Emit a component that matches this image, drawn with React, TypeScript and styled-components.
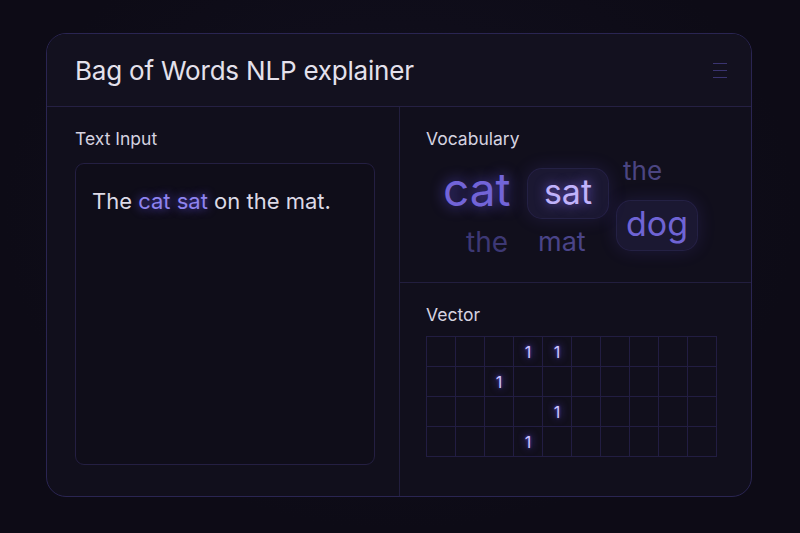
import React from "react";
import styled, { createGlobalStyle } from "styled-components";

const GlobalStyle = createGlobalStyle`
  html, body {
    margin: 0;
    padding: 0;
    background: #0d0b16;
  }
  body {
    font-family: Inter, "Noto Sans", "Liberation Sans", sans-serif;
    -webkit-font-smoothing: antialiased;
  }
`;

const Page = styled.div`
  width: 800px;
  height: 533px;
  box-sizing: border-box;
  padding: 33px 48px 36px 46px;
  background: radial-gradient(ellipse at 50% 40%, #121020 0%, #0d0b16 70%);
`;

const Card = styled.div`
  height: 100%;
  box-sizing: border-box;
  display: flex;
  flex-direction: column;
  border: 1px solid #2a2552;
  border-radius: 20px;
  background: #110f1c;
  overflow: hidden;
`;

const Header = styled.div`
  height: 72px;
  flex-shrink: 0;
  display: flex;
  align-items: center;
  justify-content: space-between;
  padding: 0 24px 0 28px;
  border-bottom: 1px solid #252043;
  background: #13111f;
`;

const Title = styled.h1`
  margin: 0;
  font-size: 26px;
  font-weight: 400;
  letter-spacing: -0.2px;
  color: #e4e1ec;
`;

const MenuIcon = styled.div`
  width: 14px;
  display: flex;
  flex-direction: column;
  gap: 6px;
  & span {
    display: block;
    height: 1px;
    background: #3a3470;
  }
`;

const Body = styled.div`
  flex: 1;
  display: grid;
  grid-template-columns: 353px 1fr;
`;

const LeftColumn = styled.div`
  display: flex;
  flex-direction: column;
  padding: 22px 24px 31px 28px;
  border-right: 1px solid #221e3e;
`;

const RightColumn = styled.div`
  display: grid;
  grid-template-rows: 176px 1fr;
`;

const Section = styled.div<{ divider?: boolean }>`
  padding: 22px 26px 0 26px;
  ${({ divider }) => divider && "border-bottom: 1px solid #221e3e;"}
`;

const Label = styled.div`
  font-size: 17.5px;
  line-height: 20px;
  color: #d6d3e0;
`;

const InputBox = styled.div`
  flex: 1;
  margin-top: 14px;
  border: 1px solid #241f42;
  border-radius: 9px;
  background: #0f0d19;
  padding: 22px 16px;
  font-size: 22px;
  line-height: 30px;
  color: #dddae6;
`;

const Highlight = styled.span`
  color: #8f84f0;
  text-shadow: 0 0 10px rgba(110, 90, 255, 0.8);
`;

const Cloud = styled.div`
  position: relative;
  height: 130px;
  margin-top: 6px;
`;

interface WordProps {
  x: number;
  y: number;
  size: number;
  tone: string;
  glow?: boolean;
}

const Word = styled.span<WordProps>`
  position: absolute;
  left: ${({ x }) => x}px;
  top: ${({ y }) => y}px;
  font-size: ${({ size }) => size}px;
  line-height: 1;
  color: ${({ tone }) => tone};
  ${({ glow }) => glow && "text-shadow: 0 0 14px rgba(110, 90, 255, 0.7);"}
`;

interface PillProps {
  x: number;
  y: number;
}

const Pill = styled.div<PillProps>`
  position: absolute;
  left: ${({ x }) => x}px;
  top: ${({ y }) => y}px;
  width: 82px;
  height: 51px;
  box-sizing: border-box;
  display: flex;
  align-items: center;
  justify-content: center;
  border-radius: 15px;
  background: rgba(70, 60, 140, 0.2);
  border: 1px solid rgba(90, 80, 170, 0.16);
  box-shadow: 0 0 18px rgba(100, 80, 230, 0.16);
`;

const PillText = styled.span<{ tone: string; glow?: boolean }>`
  font-size: 34px;
  line-height: 1;
  margin-top: -4px;
  color: ${({ tone }) => tone};
  ${({ glow }) => glow && "text-shadow: 0 0 12px rgba(140, 110, 255, 0.8);"}
`;

const VectorGrid = styled.div`
  margin-top: 11px;
  width: 290px;
  display: grid;
  grid-template-columns: repeat(10, 1fr);
  grid-auto-rows: 30px;
  border-top: 1px solid #221d42;
  border-left: 1px solid #221d42;
`;

const Cell = styled.div`
  border-right: 1px solid #221d42;
  border-bottom: 1px solid #221d42;
  display: flex;
  align-items: center;
  justify-content: center;
  font-size: 16px;
  color: #cdc6ff;
  text-shadow: 0 0 8px rgba(110, 90, 255, 0.95), 0 0 3px rgba(110, 90, 255, 0.8);
`;

const vector: number[][] = [
  [0, 0, 0, 1, 1, 0, 0, 0, 0, 0],
  [0, 0, 1, 0, 0, 0, 0, 0, 0, 0],
  [0, 0, 0, 0, 1, 0, 0, 0, 0, 0],
  [0, 0, 0, 1, 0, 0, 0, 0, 0, 0],
];

const App: React.FC = () => (
  <>
    <GlobalStyle />
    <Page>
      <Card>
        <Header>
          <Title>Bag of Words NLP explainer</Title>
          <MenuIcon>
            <span />
            <span />
            <span />
          </MenuIcon>
        </Header>
        <Body>
          <LeftColumn>
            <Label>Text Input</Label>
            <InputBox>
              The <Highlight>cat sat</Highlight> on the mat.
            </InputBox>
          </LeftColumn>
          <RightColumn>
            <Section divider>
              <Label>Vocabulary</Label>
              <Cloud>
                <Word x={17} y={11} size={46} tone="#7264d8" glow>
                  cat
                </Word>
                <Pill x={101} y={13}>
                  <PillText tone="#c0b2fa" glow>
                    sat
                  </PillText>
                </Pill>
                <Word x={197} y={3} size={26} tone="#4b4581">
                  the
                </Word>
                <Pill x={190} y={45}>
                  <PillText tone="#6f64d4">dog</PillText>
                </Pill>
                <Word x={40} y={73} size={28} tone="#3d3874">
                  the
                </Word>
                <Word x={112} y={73} size={27} tone="#4a4488">
                  mat
                </Word>
              </Cloud>
            </Section>
            <Section>
              <Label>Vector</Label>
              <VectorGrid>
                {vector.flatMap((row, r) =>
                  row.map((v, c) => <Cell key={`${r}-${c}`}>{v ? "1" : ""}</Cell>)
                )}
              </VectorGrid>
            </Section>
          </RightColumn>
        </Body>
      </Card>
    </Page>
  </>
);

export default App;
